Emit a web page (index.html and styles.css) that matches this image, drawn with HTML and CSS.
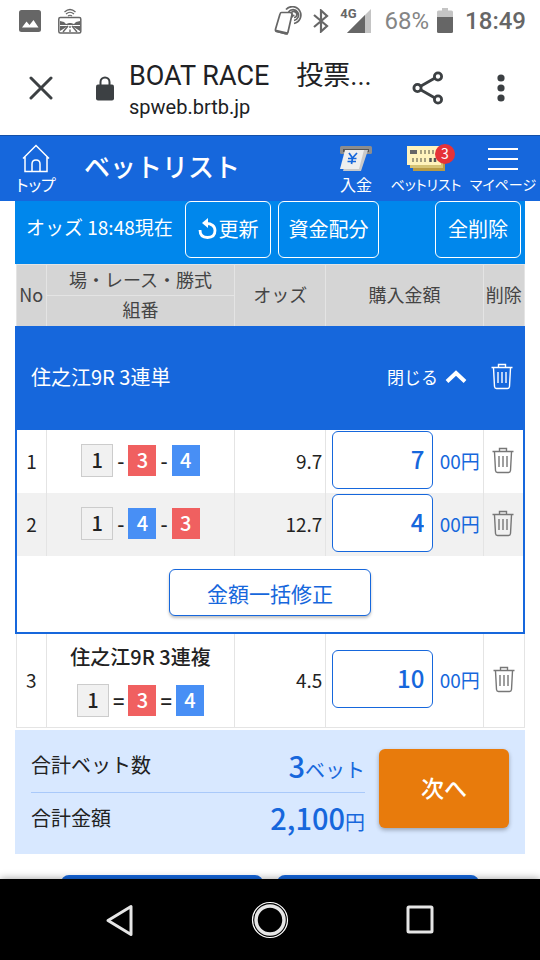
FILE: index.html
```html
<!DOCTYPE html>
<html lang="ja">
<head>
    <meta charset="UTF-8">
    <title>BOAT RACE 投票サイト</title>
    <meta name="viewport" content="width=device-width, initial-scale=1.0">
    <link rel="stylesheet" href="styles.css">
</head>
<body>

    <!-- Shared icons -->
    <svg class="icon-defs" width="0" height="0" aria-hidden="true">
        <symbol id="trash" viewBox="0 0 22 27">
            <path d="M0.5 4.5h21M7.5 4V1.5h7V4M2.500 5l1 18.500q.2 2 2 2h11q1.800 0 2-2L19.500 5M7 9v11M11 9v11M15 9v11" fill="none" stroke="currentColor" stroke-width="1.400"/>
        </symbol>
    </svg>

    <!-- Status bar -->
    <div class="status-bar">
        <div class="status-left">
            <svg width="22" height="22" viewBox="0 0 22 22"><rect width="22" height="22" rx="2.500" fill="#666"/><path d="M3 17.500l4.500-6 3 3.500 4-5 5 7.500z" fill="#fff"/></svg>
            <svg width="24" height="26" viewBox="0 0 24 26">
                <path d="M6.500 4q5.500-5 11 0M8 6q4-3.500 8 0M10 8q2-1.500 4 0" fill="none" stroke="#666" stroke-width="1.200"/>
                <rect x=".8" y="9.500" width="22" height="15.500" rx="1.500" fill="#fff" stroke="#666" stroke-width="1.500"/>
                <path d="M2 13l4 1 2 2 3-1h2l3 1 2-2 4-1v4H2zM2 18h8l-8 5zM22 18h-8l8 5z" fill="#666"/>
                <path d="M10 18l-5 6M14 18l5 6M12 18v2M12 21.500V24" stroke="#666" stroke-width="1.400"/>
            </svg>
        </div>
        <div class="status-right">
            <svg width="30" height="30" viewBox="0 0 30 30" fill="none" stroke="#666">
                <path d="M7.500 6.500h9q2 0 1.500 2L14 26q-.5 2-2.500 1.700L3 25.500q-2-.5-1.500-2.300L6 8q.4-1.500 1.500-1.500z" stroke-width="1.700"/>
                <path d="M1.500 23.500l13 3-1 2.500-12-3z" fill="#666" stroke="none"/>
                <path d="M12 3.500a8.500 8.500 0 1 1 8 14M14.500 6a5.500 5.500 0 1 1 5.500 8.500M17 7.500a3 3 0 1 1 3 4" stroke-width="1.700"/>
                <path d="M17 8l4 1-3 3z" fill="#666" stroke="none"/>
            </svg>
            <svg class="bluetooth" width="16" height="24" viewBox="0 0 16 24"><path d="M1 6l13 11-6 5.500V1.500L14 7 1 18" fill="none" stroke="#666" stroke-width="2.200"/></svg>
            <span class="network">4G</span>
            <svg class="signal" width="24" height="24" viewBox="0 0 24 24"><path d="M0 24L24 0v24z" fill="#c4c4c4"/><path d="M0 24L18 6v18z" fill="#666"/></svg>
            <span class="battery-level">68%</span>
            <svg width="16" height="25" viewBox="0 0 16 25"><path d="M0 4q0-1.500 1.500-1.500H5V0h6v2.500h3.500Q16 2.500 16 4v6H0z" fill="#c4c4c4"/><path d="M0 9h16v14.500q0 1.500-1.500 1.500h-13Q0 25 0 23.500z" fill="#666"/></svg>
            <span class="clock">18:49</span>
        </div>
    </div>

    <!-- Browser toolbar -->
    <div class="browser-bar">
        <button class="browser-button close" aria-label="閉じる">
            <svg width="24" height="24" viewBox="0 0 24 24"><path d="M2 2l20 20M22 2L2 22" stroke="#3c4043" stroke-width="3" stroke-linecap="round"/></svg>
        </button>
        <svg class="lock" width="18" height="25" viewBox="0 0 18 25"><path d="M4.500 10V6a4.500 4.500 0 0 1 9 0v4" fill="none" stroke="#3c4043" stroke-width="2"/><rect y="8.500" width="18" height="16" rx="2" fill="#3c4043"/></svg>
        <div class="page-info">
            <div class="page-title">BOAT RACE　投票...</div>
            <div class="page-url">spweb.brtb.jp</div>
        </div>
        <button class="browser-button share" aria-label="共有">
            <svg width="32" height="34" viewBox="0 0 32 34" fill="none" stroke="#3c4043" stroke-width="2.800"><path d="M9 15l14-8M9 19l14 8"/><circle cx="5.500" cy="17" r="3.600"/><circle cx="26" cy="5.500" r="3.600"/><circle cx="26" cy="28.500" r="3.600"/></svg>
        </button>
        <button class="browser-button" aria-label="メニュー">
            <svg width="8" height="28" viewBox="0 0 8 28" fill="#3c4043"><circle cx="4" cy="4" r="3.600"/><circle cx="4" cy="14" r="3.600"/><circle cx="4" cy="24" r="3.600"/></svg>
        </button>
    </div>

    <!-- Site header -->
    <header class="site-header">
        <a href="#" class="header-link home">
            <svg width="28" height="29" viewBox="0 0 28 29" fill="none" stroke="#fff" stroke-width="1.500"><path d="M1 14.500L14 1.500l13 13M3 13v14.500h22V13M10 27.500V20q0-4 4-4t4 4v7.500"/></svg>
            <span>トップ</span>
        </a>
        <h1>ベットリスト</h1>
        <a href="#" class="header-link deposit">
            <svg width="34" height="28" viewBox="0 0 34 28">
                <rect x="1" y="1" width="32" height="8" rx="1.500" fill="#8d8d8d"/><rect x="4" y="4" width="26" height="3" fill="#555"/>
                <path d="M10 5h19l-7 21H4z" fill="#c9c9c9"/><path d="M6 5h19l-5 19H1z" fill="#eee"/>
                <path d="M10 8l3.500 5L18 8M13.500 13l-1 6M9 13.500h8.500M8.500 16.500H17" fill="none" stroke="#1667dc" stroke-width="1.700"/>
            </svg>
            <span>入金</span>
        </a>
        <a href="#" class="header-link bet">
            <svg width="38" height="25" viewBox="0 0 38 25">
                <path d="M6 6h32v19H6z" fill="#b99b45"/><path d="M3 3h33v19H3z" fill="#d6c375"/><path d="M0 0h34v19H0z" fill="#fff3bd"/>
                <path d="M3 4h7v4H3zM3 6h3v2H3z" fill="#666"/>
                <path d="M14 4v4M18 4v4M22 4v4M26 4v4M6 12v4M10 12v4M14 12v4M18 12v4" stroke="#8b856b" stroke-width="1.500"/><path d="M23.500 12v4M28 12v4" stroke="#555" stroke-width="2.500"/>
            </svg>
            <span>ベットリスト</span>
            <b class="badge">3</b>
        </a>
        <a href="#" class="header-link mypage">
            <svg width="30" height="24" viewBox="0 0 30 24"><path d="M0 2h30M0 12h30M0 22h30" stroke="#fff" stroke-width="2"/></svg>
            <span>マイページ</span>
        </a>
    </header>

    <main class="content">
        <div class="toolbar">
            <span class="odds-time">オッズ 18:48現在</span>
            <button class="tool-button refresh">
                <svg width="19" height="21" viewBox="0 0 19 21"><path d="M8 5.500q9 0 9 7t-7.500 7T2 12" fill="none" stroke="#fff" stroke-width="2.800"/><path d="M4 5l6-5v10z" fill="#fff"/></svg>更新
            </button>
            <button class="tool-button allocate">資金配分</button>
            <button class="tool-button delete-all">全削除</button>
        </div>

        <table class="bet-table">
            <colgroup>
                <col class="col-no"><col class="col-race"><col class="col-odds"><col class="col-amount"><col class="col-delete">
            </colgroup>
            <thead>
                <tr><th rowspan="2">No</th><th>場・レース・勝式</th><th rowspan="2">オッズ</th><th rowspan="2">購入金額</th><th rowspan="2">削除</th></tr>
                <tr><th>組番</th></tr>
            </thead>
            <tbody class="group">
                <tr class="group-head">
                    <td colspan="5">
                        <div class="group-bar">
                            <span class="group-name">住之江9R 3連単</span>
                            <button class="fold">閉じる<svg width="22" height="13" viewBox="0 0 22 13"><path d="M2 11.500l9-8.500 9 8.500" fill="none" stroke="#fff" stroke-width="4"/></svg></button>
                            <button class="trash" aria-label="削除"><svg width="22" height="27"><use href="#trash"/></svg></button>
                        </div>
                    </td>
                </tr>
                <tr>
                    <td class="no">1</td>
                    <td><div class="combo"><b class="boat boat-1">1</b>-<b class="boat boat-3">3</b>-<b class="boat boat-4">4</b></div></td>
                    <td class="odds">9.7</td>
                    <td><label class="amount"><input type="text" value="7">00円</label></td>
                    <td class="delete"><button class="trash" aria-label="削除"><svg width="22" height="27"><use href="#trash"/></svg></button></td>
                </tr>
                <tr class="even">
                    <td class="no">2</td>
                    <td><div class="combo"><b class="boat boat-1">1</b>-<b class="boat boat-4">4</b>-<b class="boat boat-3">3</b></div></td>
                    <td class="odds">12.7</td>
                    <td><label class="amount"><input type="text" value="4">00円</label></td>
                    <td class="delete"><button class="trash" aria-label="削除"><svg width="22" height="27"><use href="#trash"/></svg></button></td>
                </tr>
                <tr class="group-foot">
                    <td colspan="5"><button class="bulk-edit">金額一括修正</button></td>
                </tr>
            </tbody>
            <tbody>
                <tr class="single">
                    <td class="no">3</td>
                    <td>
                        <div class="race-name">住之江9R 3連複</div>
                        <div class="combo"><b class="boat boat-1">1</b>=<b class="boat boat-3">3</b>=<b class="boat boat-4">4</b></div>
                    </td>
                    <td class="odds">4.5</td>
                    <td><label class="amount"><input type="text" value="10">00円</label></td>
                    <td class="delete"><button class="trash" aria-label="削除"><svg width="22" height="27"><use href="#trash"/></svg></button></td>
                </tr>
            </tbody>
        </table>

        <section class="summary">
            <dl class="totals">
                <div class="total-row"><dt>合計ベット数</dt><dd><b>3</b>ベット</dd></div>
                <div class="total-row"><dt>合計金額</dt><dd><b>2,100</b>円</dd></div>
            </dl>
            <button class="next-button">次へ</button>
        </section>

        <div class="bottom-buttons">
            <button class="bottom-button" aria-label="戻る"></button>
            <button class="bottom-button" aria-label="続ける"></button>
        </div>
    </main>

    <!-- Android navigation -->
    <nav class="android-nav">
        <button aria-label="戻る"><svg width="40" height="40" viewBox="0 0 40 40"><path d="M8 20.500L31 6.500v28z" fill="none" stroke="#e6e6e6" stroke-width="3" stroke-linejoin="round"/></svg></button>
        <button aria-label="ホーム"><svg width="40" height="40" viewBox="0 0 40 40" fill="none"><circle cx="20" cy="20" r="17.500" stroke="#fff" stroke-width="1.200"/><circle cx="20" cy="20" r="14" stroke="#e6e6e6" stroke-width="3.500"/></svg></button>
        <button aria-label="履歴"><svg width="40" height="40" viewBox="0 0 40 40"><rect x="8" y="7" width="24" height="25" rx="1" fill="none" stroke="#e6e6e6" stroke-width="3"/></svg></button>
    </nav>

</body>
</html>
```
FILE: styles.css
```css
* {
    box-sizing: border-box;
}

body {
    margin: 0;
    height: 100vh;
    display: flex;
    flex-direction: column;
    overflow: hidden;
    background: #fff;
    color: #222;
    font-family: "Noto Sans CJK JP", sans-serif;
    font-size: 18px;
}

button {
    margin: 0;
    padding: 0;
    border: none;
    background: none;
    color: inherit;
    font-family: inherit;
    font-size: inherit;
    cursor: pointer;
}

svg {
    display: block;
    flex-shrink: 0;
}

.icon-defs {
    position: absolute;
}

/* Status bar */
.status-bar {
    display: flex;
    justify-content: space-between;
    align-items: center;
    height: 41px;
    flex-shrink: 0;
    padding: 0 14px 0 19px;
    font-family: Roboto, sans-serif;
    color: #666;
}

.status-left,
.status-right {
    display: flex;
    align-items: center;
}

.status-left {
    gap: 17px;
}

.bluetooth {
    margin: 0 11px 0 9px;
}

.network {
    align-self: flex-start;
    font-size: 13px;
    line-height: 16px;
    font-weight: bold;
}

.signal {
    margin-left: -10px;
}

.battery-level {
    margin: 0 8px 0 14px;
    font-size: 24px;
    line-height: 30px;
    color: #858585;
}

.clock {
    margin-left: 12px;
    font-size: 24px;
    line-height: 30px;
    font-weight: 500;
}

/* Browser toolbar */
.browser-bar {
    display: flex;
    align-items: center;
    height: 94px;
    flex-shrink: 0;
    padding: 0 35px 0 29px;
}

.browser-button {
    display: flex;
    align-items: center;
}

.lock {
    margin: 0 15px 0 43px;
}

.page-info {
    flex: 1;
    min-width: 0;
    padding-top: 4px;
    color: #202124;
    font-family: Roboto, "Noto Sans CJK JP", sans-serif;
    white-space: nowrap;
}

.page-title {
    font-size: 27px;
    line-height: 34px;
}

.page-url {
    font-size: 20px;
    line-height: 28px;
}

.share {
    margin-right: 53px;
}

/* Site header */
.site-header {
    display: flex;
    align-items: stretch;
    height: 66px;
    flex-shrink: 0;
    border-top: 1px solid #1450a8;
    background: #1667dc;
    color: #fff;
}

.site-header h1 {
    flex: 1;
    margin: 0 0 0 12px;
    font-size: 26px;
    line-height: 60px;
    font-weight: 500;
    white-space: nowrap;
}

.header-link {
    position: relative;
    display: flex;
    flex-direction: column;
    align-items: center;
    justify-content: flex-end;
    gap: 2px;
    padding-bottom: 8px;
    color: #fff;
    font-size: 16px;
    line-height: 18px;
    text-decoration: none;
    white-space: nowrap;
    font-feature-settings: "palt";
}

.home {
    width: 72px;
}

.deposit {
    width: 60px;
}

.bet {
    width: 80px;
}

.mypage {
    width: 74px;
}

.bet,
.mypage {
    gap: 4px;
    font-size: 14px;
}

.badge {
    position: absolute;
    top: 8px;
    right: 11px;
    width: 20px;
    height: 20px;
    border-radius: 50%;
    background: #e53238;
    font-size: 14px;
    line-height: 19px;
    font-weight: normal;
    text-align: center;
}

/* Scrolling content */
.content {
    flex: 1;
    min-height: 0;
    overflow: hidden;
    padding: 0 15px;
}

.toolbar {
    display: flex;
    align-items: flex-start;
    height: 63px;
    padding: 0 4px 0 11px;
    background: #0087ec;
    color: #fff;
}

.odds-time {
    font-size: 19px;
    line-height: 52px;
    white-space: nowrap;
}

.tool-button {
    display: flex;
    align-items: center;
    justify-content: center;
    gap: 2px;
    width: 86px;
    height: 57px;
    padding-bottom: 3px;
    border: 1px solid #fff;
    border-radius: 6px;
    font-size: 20px;
    white-space: nowrap;
}

.refresh {
    margin-left: auto;
}

.allocate {
    width: 101px;
    margin-left: 7px;
}

.delete-all {
    margin-left: 56px;
}

/* Bet table */
.bet-table {
    width: 100%;
    table-layout: fixed;
    border-collapse: collapse;
}

.col-no { width: 6%; }
.col-race { width: 37%; }
.col-odds { width: 18%; }
.col-amount { width: 31%; }
.col-delete { width: 8%; }

.bet-table th,
.bet-table td {
    padding: 0;
    border: 1px solid #e4e4e4;
}

.bet-table th {
    height: 31px;
    padding-bottom: 3px;
    background: #d5d5d5;
    color: #444;
    font-size: 18px;
    line-height: 26px;
    font-weight: normal;
    white-space: nowrap;
}

.bet-table .group {
    border: 2px solid #1667dc;
}

.bet-table .group td {
    height: 63px;
    padding-bottom: 2px;
    border-top: none;
    border-bottom: none;
}

.bet-table .group .group-head td {
    height: 103px;
    padding-bottom: 5px;
    background: #1667dc;
}

.group-bar {
    display: flex;
    align-items: center;
    padding: 0 10px 0 14px;
    color: #fff;
}

.group-name {
    flex: 1;
    font-size: 20px;
}

.fold {
    display: flex;
    align-items: center;
    gap: 7px;
    margin-right: 24px;
    font-size: 17px;
}

.group-bar .trash {
    color: #fff;
}

.trash {
    color: #777;
}

.even {
    background: #f1f1f1;
}

.no {
    text-align: center;
}

.odds {
    text-align: right;
}

.bet-table .odds {
    padding-right: 3px;
}

.no,
.odds {
    font-size: 19px;
}

.combo {
    display: flex;
    align-items: center;
    justify-content: center;
    gap: 4px;
    font-size: 20px;
    font-weight: 500;
}

.boat {
    width: 28px;
    height: 31px;
    font-size: 20px;
    line-height: 29px;
    font-weight: 500;
    color: #fff;
    text-align: center;
}

.boat-1 {
    width: 32px;
    height: 33px;
    border: 1px solid #ccc;
    background: #f1f1f1;
    color: #222;
}

.boat-3 { background: #f06060; }
.boat-4 { background: #488ff5; }

.amount {
    display: flex;
    align-items: center;
    justify-content: space-between;
    padding: 0 3px 0 6px;
    color: #1667dc;
    font-size: 19px;
    white-space: nowrap;
}

.amount input {
    width: 101px;
    height: 58px;
    padding: 0 8px 3px;
    border: 1px solid #1667dc;
    border-radius: 6px;
    background: #fff;
    color: #1667dc;
    font-family: inherit;
    font-size: 24px;
    font-weight: 500;
    text-align: right;
}

.delete .trash {
    display: block;
    margin: 0 auto;
}

.bet-table .group .group-foot td {
    height: 77px;
    text-align: center;
}

.bulk-edit {
    width: 202px;
    height: 47px;
    border: 1px solid #1667dc;
    border-radius: 6px;
    background: #fff;
    box-shadow: 0 2px 3px rgba(0, 0, 0, 0.25);
    color: #1667dc;
    font-size: 21px;
}

.bet-table .single td {
    height: 95px;
    padding-bottom: 2px;
}

.race-name {
    margin-bottom: 12px;
    font-size: 20px;
    line-height: 30px;
    font-weight: 500;
    text-align: center;
}

/* Totals */
.summary {
    display: flex;
    align-items: flex-start;
    gap: 14px;
    height: 124px;
    margin-top: 2px;
    padding: 0 16px;
    background: #d8e8ff;
}

.totals {
    flex: 1;
    margin: 10px 0 0;
}

.total-row {
    display: flex;
    align-items: center;
    justify-content: space-between;
    height: 52px;
    padding-bottom: 3px;
    font-size: 20px;
}

.total-row + .total-row {
    border-top: 1px solid #a9c9fa;
}

.total-row dd {
    margin: 0;
    color: #1667dc;
}

.total-row b {
    font-size: 29px;
    line-height: 40px;
    font-weight: 500;
}

.next-button {
    width: 130px;
    height: 79px;
    margin-top: 19px;
    padding-bottom: 3px;
    border-radius: 6px;
    background: #e87b0c;
    box-shadow: 0 2px 4px rgba(0, 0, 0, 0.3);
    color: #fff;
    font-size: 23px;
    font-weight: 500;
}

.bottom-buttons {
    display: flex;
    gap: 14px;
    padding: 21px 46px 0;
}

.bottom-button {
    flex: 1;
    height: 60px;
    border-radius: 8px;
    background: #1667dc;
}

/* Android navigation */
.android-nav {
    position: relative;
    display: flex;
    justify-content: center;
    gap: 110px;
    height: 81px;
    flex-shrink: 0;
    background: #000;
    box-shadow: 0 0 8px rgba(0, 0, 0, 0.4);
}
```
